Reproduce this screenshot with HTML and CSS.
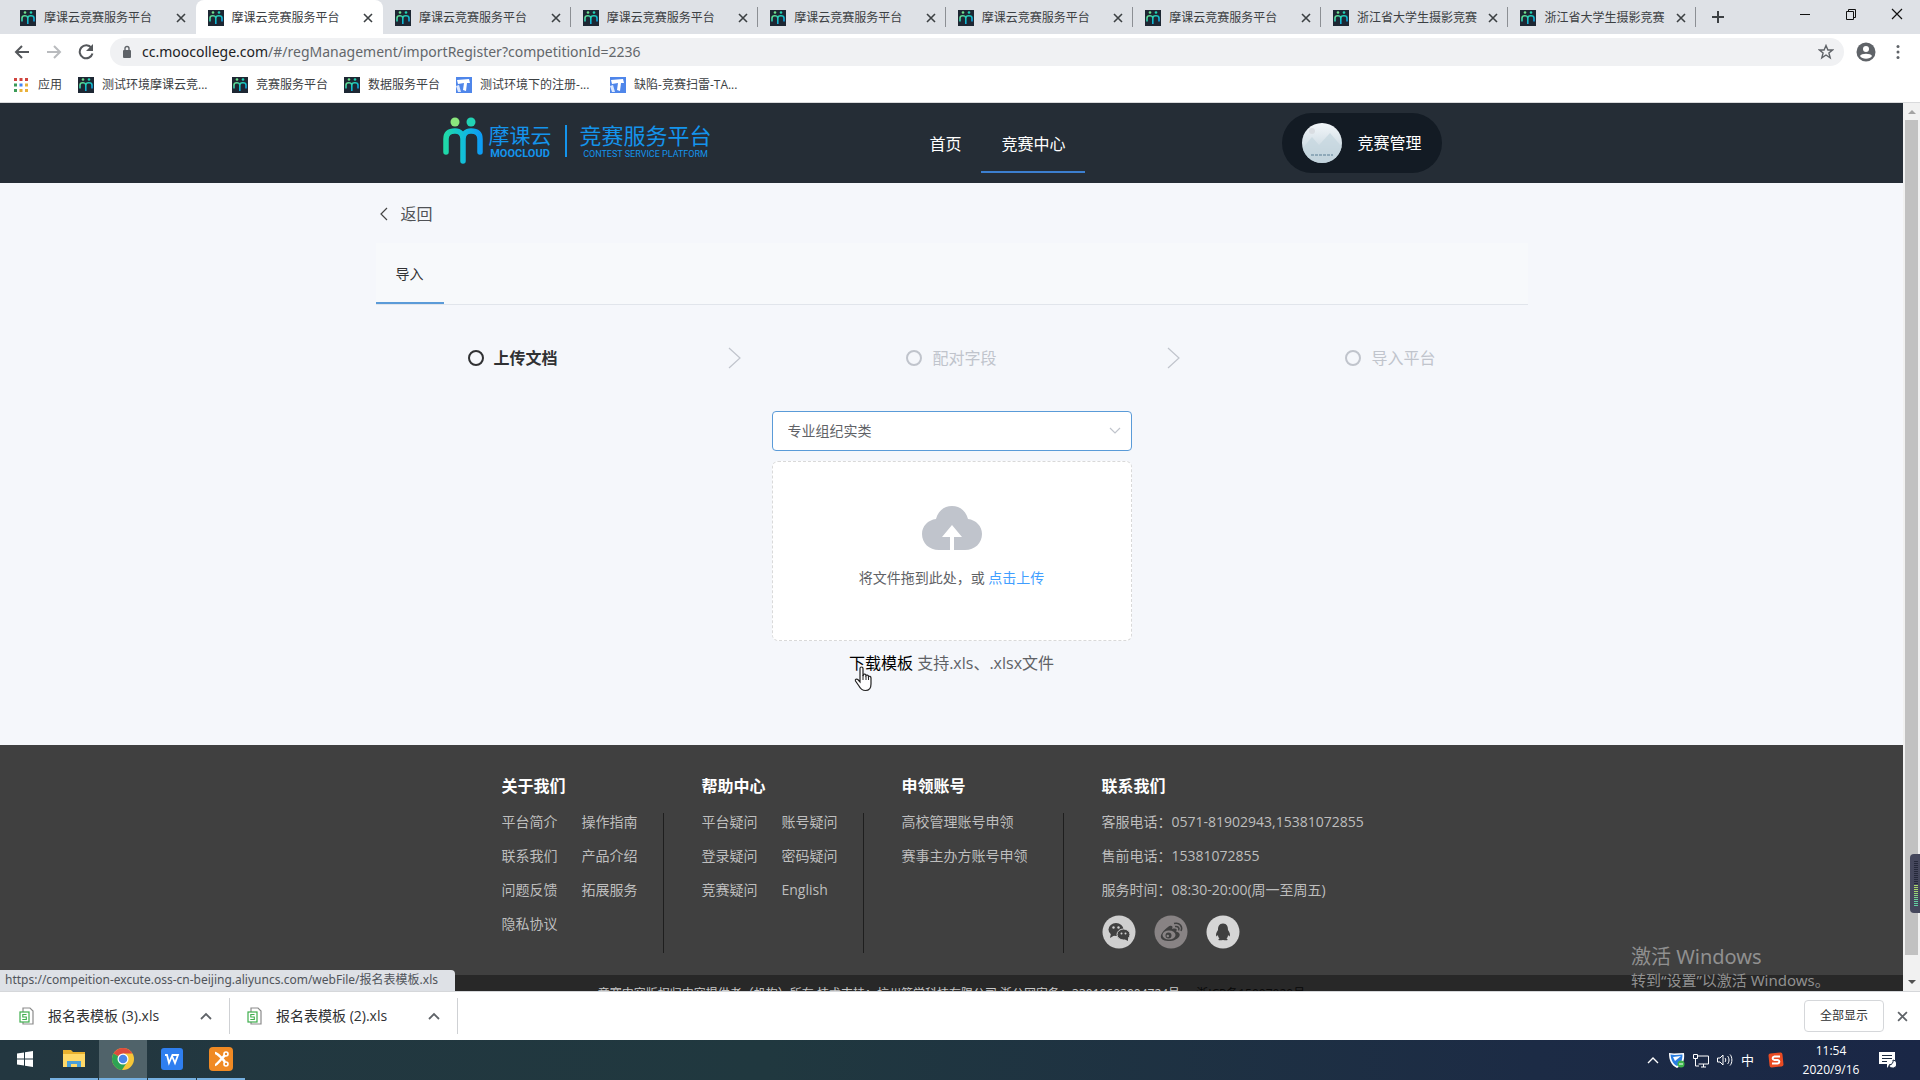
FILE: index.html
```html
<!DOCTYPE html>
<html lang="zh-CN">
<head>
<meta charset="utf-8">
<title>摩课云竞赛服务平台</title>
<link rel="stylesheet" href="styles.css">
</head>
<body>
<svg class="defs" aria-hidden="true">
  <defs>
    <linearGradient id="moo" x1="0" y1="0" x2="1" y2="1"><stop offset="0" stop-color="#6fe08c"/><stop offset=".45" stop-color="#12c9c4"/><stop offset="1" stop-color="#0d8ff0"/></linearGradient>
    <linearGradient id="moo-big" x1="0" y1="0" x2="1" y2="0"><stop offset="0" stop-color="#1fd8a8"/><stop offset=".5" stop-color="#12bfd8"/><stop offset="1" stop-color="#0d9cf4"/></linearGradient>
    <symbol id="people" viewBox="0 0 40 48">
      <circle cx="12" cy="5" r="4.500" fill="#8be77d"/><circle cx="28" cy="5" r="4.500" fill="#22d3b4"/>
      <path d="M3 35V22C3 15 8 14 12 14C17 14 20 17 20 22V44M20 22C20 17 23 14 28 14C33 14 37 16 37 22V35" fill="none" stroke="url(#moo-big)" stroke-width="5.500" stroke-linecap="round"/>
    </symbol>
    <symbol id="fav" viewBox="0 0 16 16"><rect width="16" height="16" fill="#1d2733"/><circle cx="5" cy="2.500" r="1.300" fill="#6fe08c"/><circle cx="11" cy="2.500" r="1.300" fill="#22d3b4"/><path d="M2 11.500V8C2 5 7.800 5 7.800 8V14M7.800 8C7.800 5 14 5 14 8V11.500" fill="none" stroke="url(#moo)" stroke-width="1.600"/></symbol>
    <symbol id="close" viewBox="0 0 10 10"><path d="M1 1L9 9M9 1L1 9" stroke="currentColor" stroke-width="1.600"/></symbol>
    <symbol id="tapd" viewBox="0 0 16 16"><path d="M0 0H16V16H0Z" fill="#4f86ea"/><path d="M1 3L13 2L14 6L11 6L10 14L7 13L8 6L2 7Z" fill="#fff"/><path d="M3 8L5 15H2L0 9Z" fill="#dce8ff"/></symbol>
    <symbol id="xls" viewBox="0 0 16 18"><path d="M4 1H11L14 4V17H4Z" fill="#fff" stroke="#8b8b8b" stroke-width="1.200"/><rect x="1" y="5" width="9" height="10" fill="#fff" stroke="#3fae4d" stroke-width="1.200"/><path d="M7.500 7.500H3.800V10H7.300V12.500H3.300" fill="none" stroke="#3fae4d" stroke-width="1.100"/></symbol>
    <symbol id="up" viewBox="0 0 12 8"><path d="M1 7L6 2L11 7" fill="none" stroke="currentColor" stroke-width="1.800"/></symbol>
  </defs>
</svg>

<header class="browser">
  <div class="tabstrip">
    <div class="tabs">
      <div class="tab"><svg class="fav"><use href="#fav"/></svg><span>摩课云竞赛服务平台</span><button class="tab-x" aria-label="关闭"><svg><use href="#close"/></svg></button></div>
      <div class="tab active"><svg class="fav"><use href="#fav"/></svg><span>摩课云竞赛服务平台</span><button class="tab-x" aria-label="关闭"><svg><use href="#close"/></svg></button></div>
      <div class="tab line"><svg class="fav"><use href="#fav"/></svg><span>摩课云竞赛服务平台</span><button class="tab-x" aria-label="关闭"><svg><use href="#close"/></svg></button></div>
      <div class="tab line"><svg class="fav"><use href="#fav"/></svg><span>摩课云竞赛服务平台</span><button class="tab-x" aria-label="关闭"><svg><use href="#close"/></svg></button></div>
      <div class="tab line"><svg class="fav"><use href="#fav"/></svg><span>摩课云竞赛服务平台</span><button class="tab-x" aria-label="关闭"><svg><use href="#close"/></svg></button></div>
      <div class="tab line"><svg class="fav"><use href="#fav"/></svg><span>摩课云竞赛服务平台</span><button class="tab-x" aria-label="关闭"><svg><use href="#close"/></svg></button></div>
      <div class="tab line"><svg class="fav"><use href="#fav"/></svg><span>摩课云竞赛服务平台</span><button class="tab-x" aria-label="关闭"><svg><use href="#close"/></svg></button></div>
      <div class="tab line"><svg class="fav"><use href="#fav"/></svg><span>浙江省大学生摄影竞赛</span><button class="tab-x" aria-label="关闭"><svg><use href="#close"/></svg></button></div>
      <div class="tab line"><svg class="fav"><use href="#fav"/></svg><span>浙江省大学生摄影竞赛</span><button class="tab-x" aria-label="关闭"><svg><use href="#close"/></svg></button></div>
    </div>
    <button class="newtab" aria-label="新标签页"><svg viewBox="0 0 12 12"><path d="M6 0V12M0 6H12" stroke="#3c4043" stroke-width="2"/></svg></button>
    <div class="winctl">
      <button aria-label="最小化"><svg viewBox="0 0 12 12"><path d="M1 6.500H11" stroke="#111"/></svg></button>
      <button aria-label="还原"><svg viewBox="0 0 12 12"><path d="M1.500 3.500H8.500V11.500H1.500ZM3.500 3.500V1.500H10.500V9.500H8.500" fill="none" stroke="#111"/></svg></button>
      <button aria-label="关闭窗口"><svg viewBox="0 0 12 12"><path d="M1 1L11 11M11 1L1 11" stroke="#111" stroke-width="1.200"/></svg></button>
    </div>
  </div>
  <div class="toolbar">
    <button class="tool" aria-label="后退"><svg viewBox="0 0 16 16"><path d="M15 8H2M8 2L2 8L8 14" fill="none" stroke="#55585c" stroke-width="2"/></svg></button>
    <button class="tool" aria-label="前进"><svg viewBox="0 0 16 16"><path d="M1 8H14M8 2L14 8L8 14" fill="none" stroke="#b9bbbe" stroke-width="2"/></svg></button>
    <button class="tool" aria-label="刷新"><svg viewBox="0 0 16 16"><path d="M13.500 4A6.500 6.500 0 1 0 14.500 9.500" fill="none" stroke="#55585c" stroke-width="2"/><path d="M15 0V7H8Z" fill="#55585c"/></svg></button>
    <div class="omnibox">
      <svg class="lock" viewBox="0 0 10 14"><rect x="1" y="5" width="8" height="8" rx="1" fill="#5f6368"/><path d="M3 6V3.500A2 2 0 0 1 7 3.500V6" fill="none" stroke="#5f6368" stroke-width="1.400"/></svg>
      <span class="url"><b>cc.moocollege.com</b>/#/regManagement/importRegister?competitionId=2236</span>
      <svg class="star" viewBox="0 0 16 16"><path d="M8 1.500L9.900 6H14.500L10.900 9L12.200 13.800L8 11L3.800 13.800L5.100 9L1.500 6H6.100Z" fill="none" stroke="#5f6368" stroke-width="1.400"/></svg>
    </div>
    <svg class="person" viewBox="0 0 20 20"><circle cx="10" cy="10" r="9.500" fill="#5f6368"/><circle cx="10" cy="7" r="3" fill="#fff"/><path d="M4 14C5 11 15 11 16 14C14 17.500 6 17.500 4 14Z" fill="#fff"/></svg>
    <svg class="dots" viewBox="0 0 4 16"><circle cx="2" cy="2.500" r="1.500" fill="#5f6368"/><circle cx="2" cy="8" r="1.500" fill="#5f6368"/><circle cx="2" cy="13.500" r="1.500" fill="#5f6368"/></svg>
  </div>
  <nav class="bookmarks">
    <a href="#" class="apps"><svg viewBox="0 0 14 14"><path d="M0 0h3v3H0ZM5.500 0h3v3h-3ZM11 0h3v3h-3Z" fill="#d0443e"/><path d="M0 5.500h3v3H0ZM0 11h3v3H0Z" fill="#3a9b58"/><path d="M5.500 5.500h3v3h-3Z" fill="#4285f4"/><path d="M11 5.500h3v3h-3ZM5.500 11h3v3h-3ZM11 11h3v3h-3Z" fill="#eab13a"/></svg>应用</a>
    <a href="#" class="long"><svg><use href="#fav"/></svg>测试环境摩课云竞...</a>
    <a href="#"><svg><use href="#fav"/></svg>竞赛服务平台</a>
    <a href="#"><svg><use href="#fav"/></svg>数据服务平台</a>
    <a href="#" class="long"><svg><use href="#tapd"/></svg>测试环境下的注册-...</a>
    <a href="#" class="long"><svg><use href="#tapd"/></svg>缺陷-竞赛扫雷-TA...</a>
  </nav>
</header>

<div class="window">
  <div class="page">
    <header class="site-head">
      <div class="wrap head-row">
        <a class="logo" href="#" aria-label="摩课云竞赛服务平台">
          <svg class="mark"><use href="#people"/></svg>
          <span class="brand"><span class="zh">摩课云</span><span class="en">MOOCLOUD</span></span>
          <span class="bar"></span>
          <span class="brand"><span class="zh wide">竞赛服务平台</span><span class="en small">CONTEST SERVICE PLATFORM</span></span>
        </a>
        <nav class="main-nav"><a href="#">首页</a><a href="#" class="on">竞赛中心</a></nav>
        <button class="user"><svg class="avatar" viewBox="0 0 40 40"><defs><clipPath id="av"><circle cx="20" cy="20" r="20"/></clipPath><linearGradient id="sky" x1="0" y1="0" x2="0" y2="1"><stop offset="0" stop-color="#f3f7fa"/><stop offset="1" stop-color="#b9cbd6"/></linearGradient></defs><g clip-path="url(#av)"><rect width="40" height="40" fill="url(#sky)"/><circle cx="10" cy="8" r="3" fill="#d9dde2"/><path d="M0 26L10 14L17 22L28 10L40 24V40H0Z" fill="#c5d5de" opacity=".7"/><path d="M9 32H31" stroke="#8fa9b9" stroke-width="2" stroke-dasharray="3 1"/></g></svg>竞赛管理</button>
      </div>
    </header>
    <main class="wrap">
      <a class="back" href="#"><svg viewBox="0 0 8 14"><path d="M7 1L1 7L7 13" fill="none" stroke="#444" stroke-width="1.200"/></svg>返回</a>
      <div class="section-tabs"><a href="#">导入</a></div>
      <ol class="steps">
        <li class="now"><i></i>上传文档</li>
        <li class="sep"><svg viewBox="0 0 14 22"><path d="M1 1L12 11L1 21" fill="none" stroke="#c0c4cc" stroke-width="1.200"/></svg></li>
        <li><i></i>配对字段</li>
        <li class="sep"><svg viewBox="0 0 14 22"><path d="M1 1L12 11L1 21" fill="none" stroke="#c0c4cc" stroke-width="1.200"/></svg></li>
        <li><i></i>导入平台</li>
      </ol>
      <div class="upload">
        <div class="select-box">
          <select aria-label="组别"><option>专业组纪实类</option></select>
          <svg viewBox="0 0 12 8"><path d="M1 1L6 6L11 1" fill="none" stroke="#c0c4cc" stroke-width="1.200"/></svg>
        </div>
        <div class="drop">
          <svg class="cloud" viewBox="0 0 60 44"><path d="M17 44C7 44 0 37 0 28C0 20 6 14 14 13C16 5 22 0 30 0C38 0 44 5 46 13C54 14 60 20 60 28C60 37 53 44 43 44H32V31H40L30 19L20 31H28V44Z" fill="#c0c4cc"/></svg>
          <p>将文件拖到此处，或 <a href="#">点击上传</a></p>
        </div>
        <p class="hint"><a href="#">下载模板</a> 支持.xls、.xlsx文件
          <svg class="cursor" viewBox="0 0 18 26"><path d="M6 2.500C6 .5 9 .5 9 2.500V10L9.500 8.500C10 7.800 12 8 12 9.500C12.500 8.800 14.500 9 14.500 10.500C15 10 17 10.300 17 12V18C17 22 15 24.500 11.500 24.500C8 24.500 6.500 23 5 20L1.500 15C.8 13.500 2.500 12.500 3.800 13.500L6 16Z" fill="#fff" stroke="#222" stroke-width="1.200"/><path d="M9 9V14M12 9.500V14M14.500 10.500V14" stroke="#222"/></svg>
        </p>
      </div>
    </main>
    <footer class="site-foot">
      <div class="foot-cols">
        <section><h3>关于我们</h3><div class="links"><a href="#">平台简介</a><a href="#">操作指南</a><a href="#">联系我们</a><a href="#">产品介绍</a><a href="#">问题反馈</a><a href="#">拓展服务</a><a href="#">隐私协议</a></div></section>
        <section><h3>帮助中心</h3><div class="links"><a href="#">平台疑问</a><a href="#">账号疑问</a><a href="#">登录疑问</a><a href="#">密码疑问</a><a href="#">竞赛疑问</a><a href="#">English</a></div></section>
        <section><h3>申领账号</h3><div class="links single"><a href="#">高校管理账号申领</a><a href="#">赛事主办方账号申领</a></div></section>
        <section class="contact"><h3>联系我们</h3>
          <p>客服电话：0571-81902943,15381072855</p><p>售前电话：15381072855</p><p>服务时间：08:30-20:00(周一至周五)</p>
          <div class="social">
            <a href="#" aria-label="微信"><svg viewBox="0 0 34 34"><circle cx="17" cy="17" r="16.500" fill="#cfcfcf"/><ellipse cx="14" cy="14.500" rx="7.500" ry="6.500" fill="#404040"/><path d="M9 18L8 23L13 20Z" fill="#404040"/><ellipse cx="21.500" cy="19.500" rx="6.500" ry="5.500" fill="#404040" stroke="#cfcfcf"/><path d="M22 24L26 26L26 22Z" fill="#404040"/><g fill="#cfcfcf"><circle cx="11.500" cy="12.500" r="1.200"/><circle cx="16.500" cy="12.500" r="1.200"/><circle cx="19.500" cy="18.500" r="1"/><circle cx="23.500" cy="18.500" r="1"/></g></svg></a>
            <a href="#" aria-label="微博"><svg viewBox="0 0 34 34"><circle cx="17" cy="17" r="16.500" fill="#888384"/><path d="M14 12C16 10 20 10 18 14C22 13 24 14 22 16.500C31 19 22 27 14 26C4 25 5 19 14 12Z" fill="#404040"/><ellipse cx="15" cy="20" rx="6.500" ry="4.500" fill="#888384"/><circle cx="14.500" cy="20.500" r="3" fill="#404040"/><circle cx="13.800" cy="21" r="1.200" fill="#888384"/><path d="M20 8.500C26 7 29 12 27 16M21 11.500C24 11 26 13 24.500 15.500" fill="none" stroke="#404040" stroke-width="1.500"/></svg></a>
            <a href="#" aria-label="QQ"><svg viewBox="0 0 34 34"><circle cx="17" cy="17" r="16.500" fill="#d6d6d6"/><path d="M17 8.500C13 8.500 12 11.500 12 15C10 18 9.500 20 10.500 21.500L12 20C12 21.500 12.500 22.500 13.500 23.500C11.500 24.500 12 26 17 25C22 26 22.500 24.500 20.500 23.500C21.500 22.500 22 21.500 22 20L23.500 21.500C24.500 20 24 18 22 15C22 11.500 21 8.500 17 8.500Z" fill="#404040"/></svg></a>
          </div>
        </section>
      </div>
      <div class="copyright">竞赛内容版权归内容提供者（机构）所有 技术支持：杭州箪学科技有限公司 浙公网安备：33010602004724号<a href="#">浙ICP备15007020号</a></div>
    </footer>
  </div>
  <div class="scrollbar"><svg viewBox="0 0 8 4"><path d="M0 4L4 0L8 4Z" fill="#a3a3a3"/></svg><span class="thumb"></span><svg viewBox="0 0 8 4"><path d="M0 0L4 4L8 0Z" fill="#505050"/></svg></div>
  <div class="meter"><span></span></div>
  <div class="status">https://compeition-excute.oss-cn-beijing.aliyuncs.com/webFile/报名表模板.xls</div>
  <div class="activate"><strong>激活 Windows</strong><span>转到“设置”以激活 Windows。</span></div>
</div>

<div class="shelf">
  <div class="file"><svg class="xls"><use href="#xls"/></svg><span>报名表模板 (3).xls</span><button aria-label="更多"><svg><use href="#up"/></svg></button></div>
  <div class="file"><svg class="xls"><use href="#xls"/></svg><span>报名表模板 (2).xls</span><button aria-label="更多"><svg><use href="#up"/></svg></button></div>
  <button class="show-all">全部显示</button>
  <button class="shelf-x" aria-label="关闭下载栏"><svg><use href="#close"/></svg></button>
</div>

<div class="taskbar">
  <button class="task" aria-label="开始"><svg viewBox="0 0 24 24"><path d="M4 6.500L11 5.500V11.500H4ZM12 5.300L20 4V11.500H12ZM4 12.500H11V18.500L4 17.500ZM12 12.500H20V20L12 18.700Z" fill="#fff"/></svg></button>
  <button class="task run" aria-label="文件资源管理器"><svg viewBox="0 0 24 24"><path d="M1 3H9L11 5H23V20H1Z" fill="#e8b12f"/><path d="M1 7H23V20H1Z" fill="#ffd968"/><path d="M5 20V14H19V20H15V17H9V20Z" fill="#4a9fd8"/></svg></button>
  <button class="task run lit" aria-label="Chrome"><svg viewBox="0 0 24 24"><circle cx="12" cy="12" r="11" fill="#f5c638"/><path d="M12 12L2.500 6.500A11 11 0 0 1 21.500 6.500H12Z" fill="#dd4b3e"/><path d="M12 12L2.500 6.500A11 11 0 0 0 11 23L16.500 14.500Z" fill="#2ea354"/><circle cx="12" cy="12" r="5.500" fill="#fff"/><circle cx="12" cy="12" r="4.300" fill="#4a86e8"/></svg></button>
  <button class="task run" aria-label="WPS"><svg viewBox="0 0 24 24"><rect x="1" y="1" width="22" height="22" rx="3" fill="#2f7ff0"/><path d="M5 8H7L9 16L12 9L15 16L18 8H12" fill="none" stroke="#fff" stroke-width="1.800"/></svg></button>
  <button class="task run" aria-label="录屏"><svg viewBox="0 0 24 24"><rect width="24" height="24" rx="4" fill="#f08a24"/><path d="M6 6C8 6 14 12 16 15M6 18C8 18 13 11 16 8" fill="none" stroke="#fff" stroke-width="2.500"/><circle cx="17" cy="17" r="2" fill="none" stroke="#fff" stroke-width="1.600"/><circle cx="17" cy="7" r="2" fill="none" stroke="#fff" stroke-width="1.600"/></svg></button>
  <div class="tray">
    <svg class="chev" viewBox="0 0 12 8"><path d="M1 7L6 2L11 7" fill="none" stroke="#fff" stroke-width="1.400"/></svg>
    <svg viewBox="0 0 16 16"><path d="M0 1C5 2 10 1 15 1C16 9 13 14 8 16C2 13 0 8 0 1Z" fill="#fff"/><path d="M1.500 2.500C6 3.500 10 2.500 13.500 2.500C13.500 8 12 12 8 14C4 12 2 8 1.500 2.500Z" fill="#2a7de1"/><path d="M4 5L12 4L6 9Z" fill="#fff"/><circle cx="12" cy="12" r="3.500" fill="#3cb54a"/><path d="M10 12H14" stroke="#fff"/></svg>
    <svg viewBox="0 0 16 16"><path d="M4 4H15.500V12H5.500M8 15H13M10.500 12V15M.5 2.500H4.500V6.500H.5ZM2.500 6.500V14H6" fill="none" stroke="#fff"/></svg>
    <svg viewBox="0 0 16 16"><path d="M.5 6H3L6 3V13L3 10H.5ZM8 6C9 7 9 9 8 10M10.500 4C12.500 6 12.500 10 10.500 12M13 2.500C15.500 5 15.500 11 13 13.500" fill="none" stroke="#fff"/></svg>
    <span class="ime">中</span>
    <svg class="sogou" viewBox="0 0 16 16"><rect x="1" y="1" width="14" height="14" rx="2" fill="#ea4b23" transform="rotate(-6 8 8)"/><path d="M12 4.500H6.500C4 5 4 7.500 6.500 8H9.500C12 8.500 12 11 9.500 11.500H4" fill="none" stroke="#fff" stroke-width="2"/></svg>
    <time>11:54<br>2020/9/16</time>
    <svg class="note" viewBox="0 0 18 18"><path d="M1 1H17V13H12L9 17V13H1Z" fill="#fff"/><path d="M4 4.500H14M4 7.500H14M4 10.500H9" stroke="#1c2b40"/><path d="M15 9A4 4 0 1 1 11 14A4 4 0 0 0 15 9Z" fill="#fff" stroke="#1c2b40"/></svg>
  </div>
</div>
</body>
</html>
```
FILE: styles.css
```css
* { box-sizing: border-box; }
body {
  margin: 0;
  height: 100vh;
  display: flex;
  flex-direction: column;
  overflow: hidden;
  font: 14px/20px "Open Sans", "Noto Sans CJK SC", sans-serif;
  color: #303133;
}
a { color: inherit; text-decoration: none; }
button { border: 0; padding: 0; background: none; color: inherit; font: inherit; }
svg { display: block; flex: none; }
h3, p, ol { margin: 0; padding: 0; }
.defs { position: absolute; width: 0; height: 0; }

/* Browser frame */
.browser { flex: none; font-size: 12px; background: #fff; border-bottom: 1px solid #d9dadc; }
.tabstrip { display: flex; align-items: center; height: 34px; padding-left: 8px; background: #dee1e6; }
.tabs { display: grid; grid-template-columns: repeat(9, 1fr); flex: 0 1 1688px; height: 34px; }
.tab { display: flex; align-items: center; gap: 8px; padding: 1px 10px 0 12px; color: #3c4043; white-space: nowrap; }
.tab span { flex: 1; overflow: hidden; }
.tab.active { background: #fff; border-radius: 8px 8px 0 0; }
.tab.line { background: linear-gradient(#8c8f94, #8c8f94) right center / 1px 20px no-repeat; }
.fav { width: 16px; height: 16px; }
.tab-x svg { width: 10px; height: 10px; }
.newtab { margin-left: 16px; }
.newtab svg { width: 12px; height: 12px; }
.winctl { display: flex; gap: 34px; margin: 0 17px 6px auto; }
.winctl svg { width: 12px; height: 12px; }
.toolbar { display: flex; align-items: center; gap: 16px; height: 36px; padding: 0 20px 0 14px; }
.tool svg { width: 16px; height: 16px; }
.omnibox { flex: 1; display: flex; align-items: center; height: 28px; padding: 0 10px 0 12px; border-radius: 14px; background: #f0f1f3; font: 14px/20px "Noto Sans", sans-serif; color: #63676b; }
.url { flex: 1; margin-left: 10px; }
.url b { font-weight: 400; color: #202124; }
.lock { width: 10px; height: 14px; }
.star { width: 16px; height: 16px; }
.person { width: 20px; height: 20px; margin-left: -4px; }
.dots { width: 4px; height: 16px; margin-left: 4px; }
.bookmarks { display: flex; align-items: center; gap: 16px; height: 32px; padding: 0 14px 2px; color: #3c4043; white-space: nowrap; }
.bookmarks a { display: flex; align-items: center; gap: 8px; }
.bookmarks .long { width: 138px; }
.bookmarks svg { width: 16px; height: 16px; }
.bookmarks .apps { gap: 10px; }
.bookmarks .apps svg { width: 14px; height: 14px; }

/* Page viewport */
.window { flex: 1; min-height: 0; display: flex; position: relative; overflow: hidden; }
.page { flex: 1; min-width: 0; display: flex; flex-direction: column; overflow: hidden; background: #f5f7fb; }
.wrap { width: 100%; max-width: 1152px; margin: 0 auto; }
.site-head { flex: none; background: #252d36; color: #fff; font-size: 16px; }
.head-row { display: flex; align-items: center; height: 80px; padding: 0 86px 0 67px; }
.logo { display: flex; align-items: center; height: 60px; padding-bottom: 4px; color: #1494ec; }
.mark { width: 40px; height: 48px; margin-right: 6px; }
.brand { display: flex; flex-direction: column; align-items: center; white-space: nowrap; }
.zh { font-size: 21px; line-height: 26px; }
.wide { font-size: 22px; }
.en { font: 700 11px/12px Roboto, sans-serif; }
.small { font-weight: 400; font-size: 9px; }
.bar { width: 2px; height: 32px; margin: 0 13px; background: #1494ec; }
.main-nav { display: flex; gap: 20px; margin-left: auto; }
.main-nav a { height: 60px; line-height: 62px; }
.main-nav .on { padding: 0 20px; border-bottom: 2px solid #3c7fd0; }
.user { display: flex; align-items: center; gap: 15px; height: 60px; margin-left: 197px; padding: 0 20px; border-radius: 30px; background: #131b24; }
.avatar { width: 40px; height: 40px; }

.page main { flex: none; min-height: 562px; }
.back { display: flex; align-items: center; gap: 13px; width: max-content; height: 60px; padding: 2px 0 0 4px; font-size: 16px; color: #505256; }
.back svg { width: 8px; height: 14px; }
.section-tabs { display: flex; height: 62px; border-bottom: 1px solid #e1e5eb; background: #f7f9fb; }
.section-tabs a { height: 61px; padding: 0 20px; line-height: 62px; border-bottom: 2px solid #5b9bd8; }
.steps { display: flex; justify-content: space-between; align-items: center; height: 106px; padding: 0 92px; list-style: none; font-size: 16px; color: #c0c4cc; }
.steps li { display: flex; align-items: center; gap: 10px; }
.steps i { width: 16px; height: 16px; border: 2px solid #c0c4cc; border-radius: 50%; }
.steps .now { color: #303133; font-weight: 700; }
.steps .now i { border-color: #303133; }
.steps .sep { padding-left: 6px; }
.sep svg { width: 14px; height: 22px; }
.upload { width: 360px; margin: 0 auto; }
.select-box { position: relative; }
.select-box select { display: block; appearance: none; width: 100%; height: 40px; padding: 0 15px; border: 1px solid #5a9bd8; border-radius: 4px; background: #fff; font: inherit; color: #606266; }
.select-box svg { position: absolute; right: 11px; top: 16px; width: 12px; height: 8px; }
.drop { display: flex; flex-direction: column; align-items: center; gap: 18px; height: 180px; margin-top: 10px; padding-top: 44px; border: 1px dashed #d9d9d9; border-radius: 6px; background: #fff; color: #606266; }
.cloud { width: 60px; height: 44px; }
.drop a { color: #409eff; }
.hint { position: relative; margin-top: 10px; line-height: 24px; text-align: center; font-size: 16px; color: #606266; }
.hint a { color: #000; }
.cursor { position: absolute; left: 82px; top: 15px; width: 18px; height: 26px; }

.site-foot { flex: 1 0 auto; background: #404040; color: #bebebe; }
.foot-cols { display: flex; height: 230px; max-width: 900px; margin: 0 auto; padding-top: 30px; }
.foot-cols section { width: 200px; }
.foot-cols .contact { width: 300px; }
.foot-cols h3 { margin-bottom: 16px; line-height: 22px; font-size: 16px; color: #fff; }
.links { display: grid; grid-template-columns: 80px 80px; grid-auto-rows: 34px; width: 162px; height: 140px; border-right: 1px solid #1e1e1e; line-height: 18px; }
.links.single { grid-template-columns: 1fr; }
.contact p { height: 34px; line-height: 18px; white-space: nowrap; }
.social { display: flex; gap: 18px; }
.social svg { width: 34px; height: 34px; }
.copyright { height: 40px; padding-top: 9px; background: #282828; text-align: center; font-size: 12px; color: #cacaca; }
.copyright a { margin-left: 16px; color: #080808; }

.scrollbar { flex: none; display: flex; flex-direction: column; align-items: center; justify-content: space-between; width: 17px; padding: 7px 0; background: #f1f1f1; }
.scrollbar svg { width: 8px; height: 4px; }
.thumb { flex: 1; width: 13px; margin: 6px 0 25px; background: #c1c1c1; }
.meter { position: absolute; right: 0; top: 751px; width: 10px; height: 59px; padding: 7px 2px 7px 4px; border-radius: 4px 0 0 4px; background: #45475c; }
.meter span { display: block; height: 45px; background: repeating-linear-gradient(transparent 0 1px, #45475c 1px 2px), linear-gradient(#25283a 0 24px, #a8d86a 24px 30px, #62d0a0 40px); }
.status { position: absolute; left: 0; bottom: 0; min-width: 455px; height: 21px; padding: 0 6px 0 5px; border-radius: 0 4px 0 0; background: #dee1e6; font: 12px/20px "Noto Sans", "Noto Sans CJK SC", sans-serif; color: #50545a; }
.activate { position: absolute; right: 88px; bottom: 0; width: 201px; display: flex; flex-direction: column; white-space: nowrap; color: #909090; font-family: "Noto Sans", "Noto Sans CJK SC", sans-serif; }
.activate strong { font-size: 20px; line-height: 24px; font-weight: 400; }
.activate span { font-size: 15px; line-height: 22px; }

/* Download shelf */
.shelf { flex: none; display: flex; align-items: center; height: 49px; padding: 0 12px 0 2px; border-top: 1px solid #d5d7da; background: #fff; }
.file { display: flex; align-items: center; width: 228px; height: 36px; padding: 0 17px; border-right: 1px solid #cfd1d4; }
.file span { flex: 1; margin-left: 13px; }
.xls { width: 16px; height: 18px; }
.file button svg { width: 12px; height: 8px; color: #5f6368; }
.show-all { width: 80px; height: 32px; margin-left: auto; border: 1px solid #d5d7da; border-radius: 4px; font-size: 12px; }
.shelf-x { margin-left: 13px; color: #5f6368; }
.shelf-x svg { width: 11px; height: 11px; }

/* Taskbar */
.taskbar { flex: none; display: flex; height: 40px; padding-left: 1px; background: linear-gradient(90deg, #233740 0, #20383f 40%, #1c2b45 80%, #1a2746); color: #fff; }
.task { display: grid; place-items: center; width: 48px; margin-right: 1px; border-bottom: 2px solid transparent; }
.task svg { width: 24px; height: 24px; }
.task.run { border-bottom-color: #76b0e0; }
.task.lit { background: #50636a; }
.tray { display: flex; align-items: center; gap: 8px; margin-left: auto; padding-right: 24px; }
.tray svg { width: 16px; height: 16px; }
.tray .chev { width: 12px; height: 8px; margin-right: 2px; }
.tray .note { width: 18px; height: 18px; }
.tray .sogou { margin-left: 6px; }
.ime { font-size: 13px; }
.tray time { width: 78px; text-align: center; font-size: 12px; line-height: 19px; }
```
